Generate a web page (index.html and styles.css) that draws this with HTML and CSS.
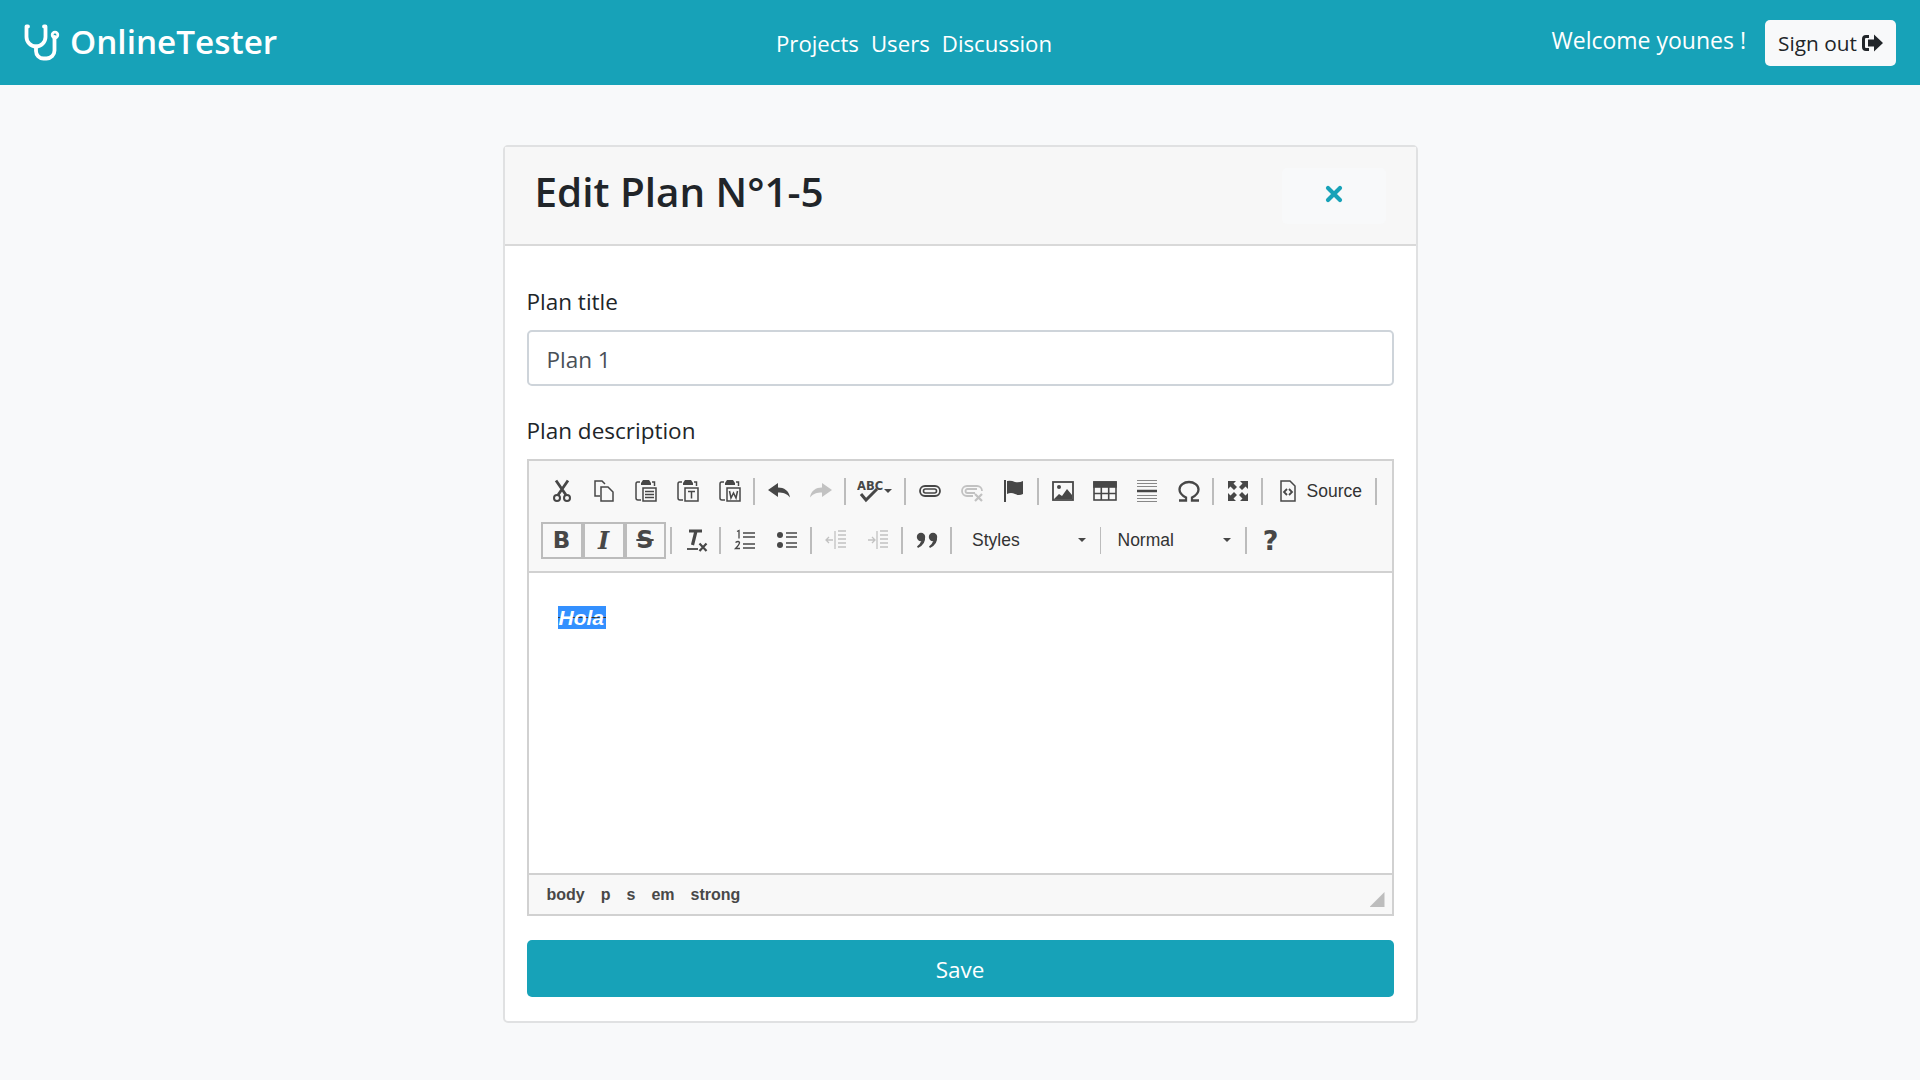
FILE: index.html
```html
<!DOCTYPE html>
<html lang="en">
<head>
  <meta charset="UTF-8" />
  <title>OnlineTester</title>
  <link rel="stylesheet" href="styles.css">
</head>
<body>
  <!-- Navbar -->
  <nav class="navbar">
    <a class="brand" href="#">
      <svg class="brand-icon" width="38" height="38" viewBox="0 0 38 38" fill="none" stroke="#fff" stroke-width="3.8" stroke-linecap="round" stroke-linejoin="round">
        <path d="M4 2.500H2.500V13a9.500 9.500 0 0 0 19 0V2.500H20"/>
        <path d="M12 22.500V27a7.500 7.500 0 0 0 7.500 7.500h3a8 8 0 0 0 8-8V13"/>
        <circle cx="31" cy="11" r="2.800" stroke-width="2.800"/>
      </svg>
      <span>OnlineTester</span>
    </a>
    <div class="nav-links">
      <a href="#">Projects</a>
      <a href="#">Users</a>
      <a href="#">Discussion</a>
    </div>
    <div class="nav-user">
      <span class="welcome">Welcome younes !</span>
      <button class="btn-signout">Sign out
        <svg width="21" height="18" viewBox="0 0 21 18"><path fill="#212529" d="M7 1H4a4 4 0 0 0-4 4v8a4 4 0 0 0 4 4h3V14H4a1 1 0 0 1-1-1V5a1 1 0 0 1 1-1h3z"/><path fill="#212529" d="M12 0.500 21 9l-9 8.500V12.500H6v-7h6z"/></svg>
      </button>
    </div>
  </nav>

  <!-- Card -->
  <main class="card">
    <div class="card-header">
      <h1>Edit Plan N°1-5</h1>
      <button class="btn-close" aria-label="Close">
        <svg width="18" height="18" viewBox="0 0 18 18" stroke="#17a2b8" stroke-width="4.200" stroke-linecap="round"><path d="M3 3l12 12M15 3L3 15"/></svg>
      </button>
    </div>
    <form class="card-body">
      <label for="title">Plan title</label>
      <input id="title" type="text" value="Plan 1" />

      <label class="label-desc">Plan description</label>
      <div class="editor">
        <div class="toolbar">
          <div class="tb-row">
            <span class="tb"><svg viewBox="0 0 24 24" fill="none" stroke="#474747" stroke-width="2.800"><path d="M6 1.500 16 16M18 1.500 8 16"/><circle cx="7" cy="19" r="3" stroke-width="2"/><circle cx="17" cy="19" r="3" stroke-width="2"/></svg></span>
            <span class="tb"><svg viewBox="0 0 24 24" fill="none" stroke="#474747" stroke-width="1.500"><path d="M8 17H3V2h7l3 3"/><path d="M9 8h7l5 5v9H9z"/></svg></span>
            <span class="tb"><svg viewBox="0 0 24 24" fill="none" stroke="#474747" stroke-width="1.500"><path d="M6 3H3.500Q2 3 2 5v14q0 2 2 2h3M18 3h2.500v4"/><path fill="#474747" stroke="none" d="M7 4l2-3h6l2 3v2H7z"/><rect x="9" y="9" width="13" height="13"/><path d="M11 12.500h9M11 15.500h9M11 18.500h9"/></svg></span>
            <span class="tb"><svg viewBox="0 0 24 24" fill="none" stroke="#474747" stroke-width="1.500"><path d="M6 3H3.500Q2 3 2 5v14q0 2 2 2h3M18 3h2.500v4"/><path fill="#474747" stroke="none" d="M7 4l2-3h6l2 3v2H7z"/><rect x="9" y="9" width="13" height="13"/><path d="M12 12.500h7M15.500 12.500V19.500"/></svg></span>
            <span class="tb"><svg viewBox="0 0 24 24" fill="none" stroke="#474747" stroke-width="1.500"><path d="M6 3H3.500Q2 3 2 5v14q0 2 2 2h3M18 3h2.500v4"/><path fill="#474747" stroke="none" d="M7 4l2-3h6l2 3v2H7z"/><rect x="9" y="9" width="13" height="13"/><path d="M11.500 12l1.500 7 2.500-5 2.500 5 1.500-7"/></svg></span>
            <i class="sep"></i>
            <span class="tb"><svg viewBox="0 0 24 24" fill="#474747"><path d="M1 11l10-7v4.500c6 0 11 3 12 10-3-4-7-5-12-5V18z"/></svg></span>
            <span class="tb off"><svg viewBox="0 0 24 24" fill="#474747"><path d="M23 11L13 4v4.500c-6 0-11 3-12 10 3-4 7-5 12-5V18z"/></svg></span>
            <i class="sep"></i>
            <span class="tb tb-spell"><svg width="36" height="24" viewBox="0 0 36 24" fill="none" stroke="#474747"><text x="0" y="11" class="svg-abc">ABC</text><path d="M4 15l5 6 11-11" stroke-width="3"/><path fill="#474747" stroke="none" d="M27 10h8l-4 4z"/></svg></span>
            <i class="sep"></i>
            <span class="tb"><svg viewBox="0 0 24 24" fill="none" stroke="#474747" stroke-width="1.800"><rect x="2" y="7" width="20" height="10" rx="5"/><rect x="5.500" y="10" width="13" height="4" rx="2" stroke-width="1.600"/></svg></span>
            <span class="tb off"><svg viewBox="0 0 24 24" fill="none" stroke="#474747" stroke-width="1.800"><path d="M13 17H7A5 5 0 0 1 7 7h10a5 5 0 0 1 5 5M17 10H7.500a2 2 0 0 0 0 4H15"/><path d="M15 15l7 7M22 15l-7 7" stroke-width="2.200"/></svg></span>
            <span class="tb"><svg viewBox="0 0 24 24" fill="#474747"><rect x="2" y="1" width="2" height="22"/><path d="M5 2q4-1 8 1 4 1 8-1v13q-4 2-8 0-4-2-8 0z"/></svg></span>
            <i class="sep"></i>
            <span class="tb"><svg viewBox="0 0 24 24" fill="none" stroke="#474747" stroke-width="1.800"><rect x="2" y="3" width="20" height="18"/><circle cx="8" cy="8" r="2" fill="#474747" stroke="none"/><path fill="#474747" stroke="none" d="M3 20l5-5 3 2 5-7 5 6v4z"/></svg></span>
            <span class="tb"><svg viewBox="0 0 24 24" fill="none" stroke="#474747" stroke-width="1.600"><rect x="1" y="3" width="22" height="18"/><rect x="1" y="3" width="22" height="5" fill="#474747"/><path d="M8.300 8v13M15.700 8v13M1 14.500h22"/></svg></span>
            <span class="tb"><svg viewBox="0 0 24 24" fill="none" stroke="#888" stroke-width="1"><path d="M2 1.500h20M2 4.500h20M2 7.500h20M2 16.500h20M2 19.500h20M2 22.500h20"/><path d="M2 12h20" stroke="#474747" stroke-width="2.500"/></svg></span>
            <span class="tb"><svg viewBox="0 0 24 24" fill="none" stroke="#474747" stroke-width="2.300"><path d="M2 21.500h7v-3C4 16 2.500 13 2.500 10.500 2.500 6 7 3 12 3s9.500 3 9.500 7.500c0 2.500-1.500 5.500-6.500 8v3h7"/></svg></span>
            <i class="sep"></i>
            <span class="tb"><svg viewBox="0 0 24 24" fill="#474747"><path d="M2 2h8L7.500 4.500 11 8 8 11 4.500 7.500 2 10zM22 2v8l-2.500-2.500L16 11l-3-3 3.500-3.500L14 2zM2 22v-8l2.500 2.500L8 13l3 3-3.500 3.500L10 22zM22 22h-8l2.500-2.500L13 16l3-3 3.500 3.500L22 14z"/></svg></span>
            <i class="sep"></i>
            <span class="tb tb-source">
              <svg viewBox="0 0 24 24" fill="none" stroke="#474747" stroke-width="1.500"><path d="M5 2h9l5 5v15H5z"/><path d="M11 10l-3 3 3 3M13 10l3 3-3 3" stroke-width="1.800"/></svg>
              <span>Source</span>
            </span>
            <i class="sep"></i>
          </div>
          <div class="tb-row">
            <div class="tb-active-group">
              <span class="tb tb-on"><b class="glyph-b">B</b></span>
              <span class="tb tb-on"><b class="glyph-i">I</b></span>
              <span class="tb tb-on tb-on-last"><b class="glyph-s">S</b></span>
            </div>
            <i class="sep"></i>
            <span class="tb"><svg viewBox="0 0 24 24" fill="none" stroke="#474747"><path d="M5 3h13M12 3l-3.500 14" stroke-width="3.200"/><path d="M3 21h11" stroke-width="1.800"/><path d="M15.500 15.500l7 7.500M22.500 15.500l-7 7.500" stroke-width="2.200"/></svg></span>
            <i class="sep"></i>
            <span class="tb"><svg viewBox="0 0 24 24" fill="none" stroke="#474747" stroke-width="1.700"><path d="M10 5h12M10 9h12M10 16h12M10 20h12"/><path d="M4 3.500l2-1v8M2.500 14.500q3-2 4 0 0 2-4 6h4.500" stroke-width="1.300"/></svg></span>
            <span class="tb"><svg viewBox="0 0 24 24" fill="none" stroke="#474747" stroke-width="1.700"><circle cx="5" cy="7" r="3" fill="#474747" stroke="none"/><circle cx="5" cy="17" r="3" fill="#474747" stroke="none"/><path d="M11 5h11M11 9h11M11 15h11M11 19h11"/></svg></span>
            <i class="sep"></i>
            <span class="tb off"><svg viewBox="0 0 24 24" fill="none" stroke="#474747" stroke-width="1.300"><path d="M14 3h8M14 7h8M14 11h8M14 15h8M14 19h8M11 3v18" /><path d="M9 12H2M5 9l-3 3 3 3"/></svg></span>
            <span class="tb off"><svg viewBox="0 0 24 24" fill="none" stroke="#474747" stroke-width="1.300"><path d="M14 3h8M14 7h8M14 11h8M14 15h8M14 19h8M11 3v18"/><path d="M2 12h7M6 9l3 3-3 3"/></svg></span>
            <i class="sep"></i>
            <span class="tb"><svg viewBox="0 0 24 24" fill="#474747"><circle cx="6" cy="9" r="4.200"/><path d="M10 9q1 7-7 11l-1-1.500q3-2 4-5z"/><circle cx="18" cy="9" r="4.200"/><path d="M22 9q1 7-7 11l-1-1.500q3-2 4-5z"/></svg></span>
            <i class="sep"></i>
            <span class="combo combo-styles">Styles<i class="caret"></i></span>
            <i class="sep sep-thin"></i>
            <span class="combo combo-format">Normal<i class="caret"></i></span>
            <i class="sep"></i>
            <span class="tb"><b class="glyph-q">?</b></span>
          </div>
        </div>
        <div class="editor-body">
          <p><s><em><strong>Hola</strong></em></s></p>
        </div>
        <div class="statusbar">
          <span>body</span><span>p</span><span>s</span><span>em</span><span>strong</span>
          <i class="resizer"></i>
        </div>
      </div>

      <button type="button" class="btn-save">Save</button>
    </form>
  </main>
</body>
</html>
```

FILE: styles.css
```css
* {
  box-sizing: border-box;
}
body {
  margin: 0;
  min-height: 1080px;
  font-family: "Open Sans", "Noto Sans", sans-serif;
  background-color: #f8f9fa;
  color: #212529;
}
a {
  color: inherit;
  text-decoration: none;
}

/* Navbar */
.navbar {
  display: flex;
  align-items: center;
  height: 85px;
  padding: 0 24px 0 24px;
  background-color: #17a2b8;
  color: #fff;
}
.brand {
  display: flex;
  align-items: center;
  width: 752px;
  gap: 8px;
  font-size: 33.3px;
  font-weight: 600;
  line-height: 40px;
}
.brand span {
  margin-top: -4px;
}
.brand-icon {
  flex: none;
  margin-top: 1px;
}
.nav-links {
  display: flex;
  gap: 12px;
  margin-top: 2px;
  font-size: 22.2px;
}
.nav-user {
  display: flex;
  align-items: center;
  gap: 19px;
  margin-left: auto;
}
.welcome {
  font-size: 23px;
  margin-top: -5px;
}
.btn-signout {
  display: flex;
  align-items: center;
  gap: 5px;
  height: 46px;
  width: 131px;
  justify-content: center;
  border: none;
  border-radius: 5px;
  background: #f8f9fa;
  color: #212529;
  font-family: inherit;
  font-size: 20.8px;
}

/* Card */
.card {
  width: 915px;
  margin: 60px auto 0;
  border: 2px solid #e0e1e2;
  border-radius: 5px;
  background: #fff;
}
.card-header {
  display: flex;
  align-items: center;
  justify-content: space-between;
  height: 99px;
  padding: 0 30px;
  background: #f7f7f7;
  border-bottom: 2px solid #d9d9d9;
}
.card-header h1 {
  margin: 0 0 9px;
  font-size: 40.4px;
  font-weight: 600;
}
.btn-close {
  display: flex;
  align-items: center;
  justify-content: center;
  width: 104px;
  height: 56px;
  padding: 0 0 4px;
  border: none;
  border-radius: 5px;
  background: #f8f9fa;
}
.card-body {
  padding: 40px 22px 24px;
}
label {
  display: block;
  margin-bottom: 12px;
  font-size: 22.5px;
  line-height: 32px;
}
.label-desc {
  margin-top: 29px;
}
input {
  display: block;
  width: 100%;
  height: 56px;
  padding: 2px 18px 0;
  border: 2px solid #ced4da;
  border-radius: 5px;
  font-family: inherit;
  font-size: 22.5px;
  color: #495057;
}

/* Editor */
.editor {
  border: 2px solid #d1d1d1;
  margin-bottom: 24px;
  font-family: "Liberation Sans", Arial, sans-serif;
}
.toolbar {
  height: 112px;
  padding: 7px 0 0 12px;
  background: #f8f8f8;
  border-bottom: 2px solid #d1d1d1;
}
.tb-row {
  display: flex;
  align-items: center;
  height: 46px;
  margin-bottom: 3px;
}
.tb {
  display: flex;
  flex: none;
  align-items: center;
  justify-content: center;
  width: 42px;
  height: 38px;
  color: #474747;
}
.tb svg {
  width: 24px;
  height: 24px;
}
.tb.off {
  opacity: 0.3;
}
.tb-spell {
  width: 53px;
}
.tb-spell svg {
  width: 36px;
}
.svg-abc {
  font-family: "DejaVu Sans", sans-serif;
  font-size: 11.500px;
  font-weight: 700;
  fill: #474747;
  stroke: none;
}
.tb-source {
  width: 107px;
  justify-content: flex-start;
  gap: 7px;
  padding-left: 10px;
  font-size: 17.500px;
  color: #333;
}
.sep {
  flex: none;
  width: 2px;
  height: 27px;
  margin: 0 2.5px;
  background: #bcbcbc;
}
.sep-thin {
  width: 1px;
}
.tb-active-group {
  display: flex;
  gap: 4px;
  padding: 2px;
  margin-right: 2px;
  background: #bcbcbc;
}
.tb-on {
  width: 38px;
  height: 33px;
  background: #f8f8f8;
}
.tb-on-last {
  width: 37px;
}
.tb-on b,
.glyph-q {
  font-family: "DejaVu Sans", sans-serif;
  font-size: 23px;
  color: #474747;
}
.tb-on .glyph-i {
  font-family: "DejaVu Serif", serif;
  font-style: italic;
  font-size: 24px;
}
.tb-on .glyph-s {
  font-size: 24px;
  text-decoration: line-through;
}
.glyph-q {
  font-size: 27px;
}
.combo {
  display: flex;
  flex: none;
  align-items: center;
  justify-content: space-between;
  height: 38px;
  padding: 0 12px 0 17.5px;
  font-size: 17.500px;
  color: #333;
}
.combo-styles {
  width: 143px;
}
.combo-format {
  width: 139px;
  padding-left: 14px;
}
.caret {
  width: 0;
  height: 0;
  border: 4.500px solid transparent;
  border-top-color: #474747;
  border-bottom: none;
}
.editor-body {
  height: 300px;
  padding: 33px 29px 0;
  background: #fff;
  font-size: 21px;
  line-height: 24px;
}
.editor-body p {
  margin: 0;
}
.editor-body s {
  text-decoration: none;
  background: linear-gradient(#333, #333) center / 100% 1px no-repeat, #3390ff;
  color: #fff;
  padding: 0 2px 0 1px;
}
.statusbar {
  display: flex;
  align-items: center;
  gap: 16px;
  height: 41px;
  padding: 0 15px 0 18px;
  background: #f8f8f8;
  border-top: 2px solid #d1d1d1;
  font-size: 16px;
  font-weight: 700;
  color: #484848;
}
.resizer {
  width: 15px;
  height: 15px;
  margin: 10px -8px 0 auto;
  background: #bdbdbd;
  clip-path: polygon(100% 0, 100% 100%, 0 100%);
}
.btn-save {
  display: block;
  width: 100%;
  height: 57px;
  padding: 2px 0 0;
  border: none;
  border-radius: 5px;
  background: #17a2b8;
  color: #fff;
  font-family: inherit;
  font-size: 22.500px;
}
```
